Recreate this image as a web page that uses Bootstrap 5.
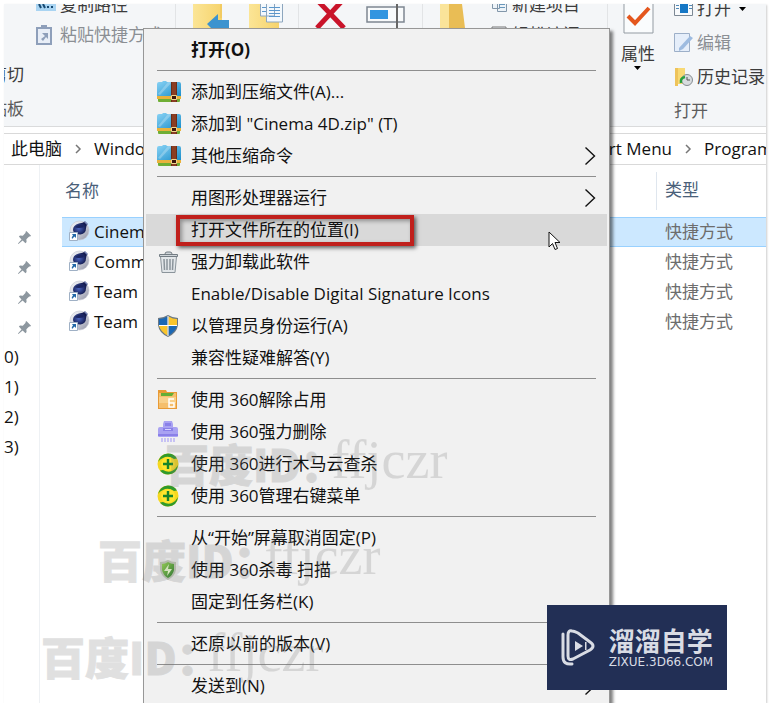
<!DOCTYPE html>
<html lang="zh-CN">
<head>
<meta charset="utf-8">
<meta name="viewport" content="width=device-width, initial-scale=1">
<title>Programs</title>
<link href="https://cdn.jsdelivr.net/npm/bootstrap@5.3.0/dist/css/bootstrap.min.css" rel="stylesheet">
<style>
body{font-family:"Open Sans","Noto Sans CJK SC",sans-serif;font-size:17px;line-height:24px;color:#111;background:#fff}
button{font:inherit;color:inherit;background:none;border:0;padding:0;text-align:left;white-space:nowrap}
svg{display:block;flex:none}
.explorer{margin:4px 4px 0;height:calc(100vh - 9px);min-height:500px;box-shadow:1px 1px 2px #ccc}
.ribbon{height:123px;background:#f4f6f8;border-bottom:1px solid #dadbdc;color:#3c3c3c}
.group{border-right:1px solid #e2e4e6;flex:none}
.g-clip{width:172px}.g-org{width:123px}.g-edit{width:124px}.g-new{width:185px}
.edge-col{width:20px;line-height:34px}
.clip-col{padding:0 0 76px 12px}
.new-col{padding:0 0 76px 24px}
.clip-col button,.new-col button{height:30px;flex:none}
.big-row{height:24px}
.open-col{padding-left:6px}
.open-col>*{height:34px;flex:none}
.open-col .dim{height:32px;line-height:34px}
.prop-col{width:60px}
.faded{color:#8b8f94}
.dim{color:#5d5d5d}
.address{height:32px;margin-top:6px;border:solid #d9d9d9;border-width:1px 0;line-height:22px}
.address a{color:#111;text-decoration:none}
.address .here{padding-left:7px}
.last-crumb{width:62px}
.side{width:36px;border-right:1px solid #eef1f4;padding-top:57px;line-height:30px}
.side>*{height:30px}
.side>div{padding-right:7px}
.files{padding-left:22px}
.files table{table-layout:fixed}
.files th{height:52px;font-weight:400;color:#4a6079;padding:0 3px;vertical-align:middle}
.files td{height:30px;padding:0 6px;vertical-align:middle}
.files .kind{width:110px;padding-left:9px;color:#6d6d6d}
.files th.kind{color:#4a6079}
.files th.kind span{display:block;border-left:1px solid #dfe6ee;margin-left:-9px;padding:6px 0 8px 8px}
.files .picked td{background:#cce8ff;box-shadow:inset 0 1px #99d1ff,inset 0 -1px #99d1ff}
.context{left:139px;top:24px;width:467px;background:#f1f1f1;border:1px solid #979797;padding:5px 2px;box-shadow:3px 3px 3px rgba(0,0,0,.5);z-index:2}
.context button{height:32px;width:100%;padding:0 11px}
.context button.hot{background:#d9d9d9}
.context .slot{width:24px;margin-right:10px}
.context hr{margin:4px 11px 5px;border-top:1px solid #8e8e8e;opacity:1}
.outline-box{left:30px;top:1px;width:238px;height:31px;border:4px solid #c0201c;box-shadow:2px 2px 4px rgba(0,0,0,.6),inset 2px 2px 4px rgba(0,0,0,.35)}
.pointer{left:402px;top:17px}
.stamp{z-index:3;opacity:.22;color:#777;white-space:nowrap;pointer-events:none;line-height:60px}
.stamp b{font:900 44px/60px "Noto Sans CJK SC",sans-serif;-webkit-text-stroke:1px #777}
.stamp i{font:normal 54px/60px "Liberation Serif",serif;margin-left:-13px;vertical-align:4px}
.s1{left:161px;top:426px}.s2{left:94px;top:522px}.s3{left:37px;top:619px}
.brand{z-index:4;right:39px;bottom:13px;width:180px;height:85px;background:#222f55;color:#d9dce4}
.brand strong{font-size:26px;line-height:28px;font-weight:700}
.brand small{font-family:"DejaVu Sans",sans-serif;font-size:12px;line-height:14px}
</style>
<script src="https://cdn.jsdelivr.net/npm/bootstrap@5.3.0/dist/js/bootstrap.bundle.min.js"></script>
</head>
<body>
<svg width="0" height="0" class="position-absolute" aria-hidden="true">
<defs>
<linearGradient id="gb" x2="1" y2="1"><stop stop-color="#8bd3f5"/><stop offset="1" stop-color="#1c8fcb"/></linearGradient>
<linearGradient id="gy" x2="1"><stop stop-color="#fbe596"/><stop offset="1" stop-color="#f6d36c"/></linearGradient>
<linearGradient id="gs" x2="1" y2="1"><stop stop-color="#f7f8fb"/><stop offset=".5" stop-color="#cfd1dc"/><stop offset="1" stop-color="#8e90a0"/></linearGradient>
<radialGradient id="gn" cx=".4" cy=".55"><stop stop-color="#4a63bd"/><stop offset="1" stop-color="#141c52"/></radialGradient>
<linearGradient id="gg" x2="1" y2="1"><stop stop-color="#9ade4c"/><stop offset="1" stop-color="#1e7a22"/></linearGradient>
<symbol id="zip" viewBox="0 0 24 24"><path fill="#6fae35" d="M1 17h22v4q0 1-1 1H2q-1 0-1-1z"/><path fill="#e9b23c" d="M0 16h24v3H0z"/><path fill="url(#gb)" d="M0 4q0-2 2-2h3l1-1h3l1 1h12q2 0 2 2v12H0z"/><path fill="#fff" opacity=".25" d="M1 14 11 2h4L3 15z"/><path fill="#8a3d22" d="M14 2h6v20h-6z"/><path fill="#6b2d18" d="M14 2h1v20h-1zM19 2h1v20h-1z"/><path fill="#3c160b" stroke="#f0d68c" d="M14.500 15.500h5v4h-5z"/></symbol>
<symbol id="c4d" viewBox="0 0 22 22"><circle cx="11.500" cy="10.500" r="9.500" fill="url(#gs)" stroke="#c3c5d0" stroke-width=".6"/><path fill="url(#gn)" d="M5 10Q5 5 11 3.500q4-.5 6-2l2.500 2.500q-1.500 2-1.500 4.500 0 5-5.500 6-7 0-7.500-4.500z"/><path fill="#1b2562" d="M7 7q3-3 7-2.500 3 1 1 3Q9 8.500 7 7z"/><path fill="#7a87b8" d="m17 1 3 3-1 1-3-3z"/><path fill="#fff" stroke="#9fb0c5" d="M1.500 12.500h8v8h-8z"/><path fill="#2369a8" d="M4 14h4v4l-1.500-1.500L4 19q-1-2 1-3.500z"/></symbol>
<symbol id="pin" viewBox="0 0 16 16"><path fill="#8d979f" d="m10 1 5 5-1 1-1-.2-3 3 .2 3-1.200 1.200L6 11.200 1.500 15l-.5-.5L4.800 10 2 7l1.200-1.200 3 .2 3-3L9 2z"/></symbol>
<symbol id="plus360" viewBox="0 0 22 22"><circle cx="11" cy="11" r="10.500" fill="#f7d81f"/><path fill="#2f9a2c" d="M1 9Q3 1 11 .5q6 0 9 5l-3 .500Q11 2 6 5 3 6 1 9zM21 12q-1 9-10 9.500-5 0-8-4l3-.5q5 3 9 1 4-2 6-6z"/><circle cx="11" cy="11" r="7" fill="#fde52c"/><path stroke="#15842a" stroke-width="2.400" d="M11 6v10M6 11h10"/></symbol>
<symbol id="crumb" viewBox="0 0 8 10"><path d="m2 1 4 4-4 4" fill="none" stroke="#777" stroke-width="1.500"/></symbol>
<symbol id="more" viewBox="0 0 12 20"><path d="m1.500 1.500 9 8.500-9 8.500" fill="none" stroke="#111" stroke-width="1.400"/></symbol>
</defs></svg>

<main class="explorer position-relative overflow-hidden d-flex flex-column">
  <header class="ribbon d-flex overflow-hidden flex-shrink-0">
    <div class="group g-clip d-flex align-items-end">
      <div class="edge-col d-flex flex-column align-items-end flex-shrink-0"><button>剪切</button><span class="dim text-nowrap">剪贴板</span></div>
      <div class="clip-col d-flex flex-column">
        <button class="d-flex align-items-center gap-1"><svg width="20" height="18"><path fill="#a9d4f2" d="M0 0h20v15H0z"/><path stroke="#174a72" stroke-width="2" d="m3 8 2 4m2-4 2 4m2-1h2m2 0h2"/></svg>复制路径</button>
        <button class="d-flex align-items-center gap-2 faded"><svg width="16" height="20"><path fill="#e8eef7" stroke="#8e9fba" stroke-width="2" d="M1 3h14v16H1z"/><path fill="#8e9fba" d="M5 0h6v4H5zM6 8h6v6l-2-2-3 4-2-2 4-3z"/></svg>粘贴快捷方式</button>
      </div>
    </div>
    <div class="group g-org"><button class="big-row d-flex ps-3 gap-3" aria-label="移动到 复制到"><svg width="38" height="24"><path fill="url(#gy)" d="M1 0h29v24H1z"/><path fill="#f2cb62" d="M28 0h2v14h-2z"/><path fill="#3c93cf" d="m15 20 11-10v6h11v8H19z"/></svg><svg width="38" height="24"><path fill="url(#gy)" d="M3 0h30v24H3z"/><path fill="#f3f8fc" stroke="#8da6be" d="M14.500-1h14v13h-14zM20.500-1h16v19h-16z"/><path stroke="#5b97cc" d="M16 3.500h4M16 7.500h4M23 3.500h11M23 6.500h11M23 9.500h11M23 12.500h11"/></svg></button></div>
    <div class="group g-edit"><button class="big-row d-flex ps-3" aria-label="删除 重命名"><svg width="32" height="24"><path stroke="#c9142a" stroke-width="5" d="m3-3 26 27M27-3 2 24"/></svg><svg class="ms-3" width="46" height="24"><path fill="#f8fafb" stroke="#7d8791" stroke-width="1.500" d="M4 3h37v15H4z"/><path fill="#3295e0" d="M7 6h18v9H7z"/><path stroke="#666" stroke-width="2" d="M34 0v24"/></svg></button></div>
    <div class="group g-new d-flex align-items-end">
      <svg class="align-self-start ms-3" width="28" height="24"><path fill="#fae49a" d="M1 0h12v24H1z"/><path fill="#e9bd55" d="M10 0h13l3 24H10z"/></svg>
      <div class="new-col d-flex flex-column"><button class="d-flex align-items-center gap-1"><svg width="17" height="20"><path fill="#edf3f8" stroke="#8297aa" d="M1.500 1.500h7v12h-7zM6.500 3.500h9v13h-9z"/><path stroke="#6997bb" d="M8 9.500h6M8 12.500h6"/></svg>新建项目</button><button class="d-flex align-items-center gap-1"><svg width="17" height="20"><path fill="#edf3f8" stroke="#777" d="M1 2h14v15H1z"/></svg>轻松访问</button></div>
    </div>
    <div class="prop-col d-flex flex-column align-items-center flex-shrink-0"><button class="d-flex flex-column align-items-center"><svg width="31" height="30"><path fill="#fafcfd" stroke="#939ba2" d="M1-1h29v30H1z"/><path fill="none" stroke="#e4571e" stroke-width="4" d="m5 12 7 7L26 4"/></svg><span class="pt-2">属性</span><svg width="8" height="4"><path d="M0 0h7L3.500 4z"/></svg></button></div>
    <div class="open-col d-flex flex-column justify-content-end text-nowrap">
      <button class="d-flex align-items-center gap-1"><svg width="19" height="18"><path fill="#f8fafc" stroke="#7c8894" d="M.500.500h18v15H.500z"/><path fill="#1577c5" d="M6 3h8v10H6z"/><path stroke="#5089b7" d="M2 5.500h3M2 8.500h3M15 5.500h3M15 8.500h3"/></svg>打开<svg class="ms-1" width="8" height="4"><path d="M0 0h7L3.500 4z"/></svg></button>
      <button class="d-flex align-items-center gap-1 faded"><svg width="19" height="20"><path fill="#e5eefa" stroke="#9cafc8" d="M.500.500h15v18H.500z"/><path fill="#9dbbe0" d="m5 15 11-12 3 2-10 11-4 2z"/></svg>编辑</button>
      <button class="d-flex align-items-center gap-1"><svg width="19" height="20"><path fill="#f8d974" d="M1 1h10v16H1z"/><path fill="#eec35a" d="M1 1h3v18H1z"/><circle cx="13" cy="13" r="5.500" fill="#d8dcdf" stroke="#858c92"/><path d="M13 10v3h3" stroke="#555" fill="none"/><path fill="none" stroke="#28a03e" stroke-width="2.500" d="M7 16q-1-5 4-6"/></svg>历史记录</button>
      <span class="dim">打开</span>
    </div>
  </header>
  <nav class="address d-flex align-items-center justify-content-between flex-shrink-0 text-nowrap" aria-label="地址">
    <div class="here d-flex align-items-center gap-2"><a href="#">此电脑</a><svg class="mx-1" width="8" height="10"><use href="#crumb"/></svg><a href="#">Windows</a></div>
    <div class="d-flex align-items-center gap-2"><a href="#">Start Menu</a><svg class="mx-1" width="8" height="10"><use href="#crumb"/></svg><a class="last-crumb overflow-hidden" href="#">Programs</a></div>
  </nav>
  <div class="d-flex flex-grow-1">
    <aside class="side d-flex flex-column flex-shrink-0">
      <div class="d-flex align-items-center justify-content-end"><svg width="15" height="15"><use href="#pin"/></svg></div>
      <div class="d-flex align-items-center justify-content-end"><svg width="15" height="15"><use href="#pin"/></svg></div>
      <div class="d-flex align-items-center justify-content-end"><svg width="15" height="15"><use href="#pin"/></svg></div>
      <div class="d-flex align-items-center justify-content-end"><svg width="15" height="15"><use href="#pin"/></svg></div>
      <span>0)</span><span>1)</span><span>2)</span><span>3)</span>
    </aside>
    <section class="files flex-grow-1">
      <table class="w-100">
        <thead><tr><th>名称</th><th class="kind"><span>类型</span></th></tr></thead>
        <tbody>
          <tr class="picked"><td><div class="d-flex gap-1"><svg width="22" height="22"><use href="#c4d"/></svg><span>Cinema 4D</span></div></td><td class="kind">快捷方式</td></tr>
          <tr><td><div class="d-flex gap-1"><svg width="22" height="22"><use href="#c4d"/></svg><span>Commandline</span></div></td><td class="kind">快捷方式</td></tr>
          <tr><td><div class="d-flex gap-1"><svg width="22" height="22"><use href="#c4d"/></svg><span>Team</span></div></td><td class="kind">快捷方式</td></tr>
          <tr><td><div class="d-flex gap-1"><svg width="22" height="22"><use href="#c4d"/></svg><span>Team</span></div></td><td class="kind">快捷方式</td></tr>
        </tbody>
      </table>
    </section>
  </div>

  <div class="context position-absolute" role="menu">
    <button class="d-flex align-items-center fw-bold"><span class="slot"></span>打开(O)</button>
    <hr>
    <button class="d-flex align-items-center"><svg class="slot" height="24"><use href="#zip"/></svg>添加到压缩文件(A)...</button>
    <button class="d-flex align-items-center"><svg class="slot" height="24"><use href="#zip"/></svg>添加到 "Cinema 4D.zip" (T)</button>
    <button class="d-flex align-items-center"><svg class="slot" height="24"><use href="#zip"/></svg>其他压缩命令<svg class="ms-auto" width="12" height="20"><use href="#more"/></svg></button>
    <hr>
    <button class="d-flex align-items-center"><span class="slot"></span>用图形处理器运行<svg class="ms-auto" width="12" height="20"><use href="#more"/></svg></button>
    <button class="hot d-flex align-items-center position-relative"><span class="slot"></span>打开文件所在的位置(I)<span class="outline-box position-absolute"></span><svg class="pointer position-absolute" width="14" height="20" viewBox="0 0 14 20"><path fill="#fff" stroke="#111" d="M1 1v15l3.500-3.500L7 18.500l2.500-1L7 11.500h5z"/></svg></button>
    <button class="d-flex align-items-center"><svg class="slot" height="24" viewBox="0 0 24 24"><path fill="#e2e6e9" stroke="#8b949b" d="M3.500 6.500h16l-1.500 16H5z"/><path fill="#cfd5d9" stroke="#737c83" d="M2.500 4.500h18v2h-18zM8 4q0-2 2-2h3q2 0 2 2"/><path stroke="#8b949b" stroke-width="1.500" d="m7 9 .5 11M10 9v11M13 9v11m3-11-.5 11"/></svg>强力卸载此软件</button>
    <button class="d-flex align-items-center"><span class="slot"></span>Enable/Disable Digital Signature Icons</button>
    <button class="d-flex align-items-center"><svg class="slot" height="24" viewBox="0 0 24 24"><path fill="#6b7884" d="M11 1Q6 4 1 4v7q1 8 10 12 9-4 10-12V4Q16 4 11 1z"/><path fill="#1b68b5" d="M10.500 2.500Q6 5 2 5v6h8.500zM11.500 12H20q-2 6-8.500 9.500z"/><path fill="#f9c52d" d="M11.500 2.500Q16 5 20 5v6h-8.500zM10.500 12H2q2 6 8.500 9.500z"/><path stroke="#fff" d="M11 2v20M2 11.500h18"/></svg>以管理员身份运行(A)</button>
    <button class="d-flex align-items-center"><span class="slot"></span>兼容性疑难解答(Y)</button>
    <hr>
    <button class="d-flex align-items-center"><svg class="slot" height="24" viewBox="0 0 24 24"><path fill="#e89a35" d="M1 2h8l1 2h10v17H1z"/><path fill="#f5bf6c" d="M2 5h17v15H2z"/><path fill="#f8d08a" d="M2 9h17v6H2z"/><path fill="#62ae36" d="M4 5h13l-2 3H4z"/><path fill="none" stroke="#fff" stroke-width="1.500" d="M17 11h-5v8h5v-4h-5"/></svg>使用 360解除占用</button>
    <button class="d-flex align-items-center"><svg class="slot" height="24" viewBox="0 0 24 24"><path fill="#a9a2f2" d="M7 1h8l1 3v3h3q2 0 2 2v7q0 1-1 1H2q-1 0-1-1V9q0-2 2-2h3V4z"/><path fill="#8a80e8" d="M8 3h6v3H8zM6 8h10v3H6zM1 14h20v2H1z"/><path fill="#d8d4ff" d="M8 9h6v1H8z"/><path stroke="#b9b3f5" stroke-width="1.500" d="M5 18v4M8 18v4M11 18v4M14 18v4M17 18v4"/></svg>使用 360强力删除</button>
    <button class="d-flex align-items-center"><svg class="slot" height="22"><use href="#plus360" width="22" height="22"/></svg>使用 360进行木马云查杀</button>
    <button class="d-flex align-items-center"><svg class="slot" height="22"><use href="#plus360" width="22" height="22"/></svg>使用 360管理右键菜单</button>
    <hr>
    <button class="d-flex align-items-center"><span class="slot"></span>从“开始”屏幕取消固定(P)</button>
    <button class="d-flex align-items-center"><svg class="slot" height="24" viewBox="0 0 24 24"><path fill="#c3cbb9" d="M11 2Q8 4 3 4v8q1 6 8 10 7-4 8-10V4q-5 0-8-2z"/><path fill="url(#gg)" d="M11 4Q8 6 5 6v6q1 5 6 8 5-3 6-8V6q-3 0-6-2z"/><path fill="#edffd0" d="m12 6-5 7h4l-1 5 5-7h-4z"/></svg>使用 360杀毒 扫描</button>
    <button class="d-flex align-items-center"><span class="slot"></span>固定到任务栏(K)</button>
    <hr>
    <button class="d-flex align-items-center"><span class="slot"></span>还原以前的版本(V)</button>
    <hr>
    <button class="d-flex align-items-center"><span class="slot"></span>发送到(N)<svg class="ms-auto" width="12" height="20"><use href="#more"/></svg></button>
  </div>

  <div class="stamp s1 position-absolute"><b>百度ID：</b><i>ffjczr</i></div>
  <div class="stamp s2 position-absolute"><b>百度ID：</b><i>ffjczr</i></div>
  <div class="stamp s3 position-absolute"><b>百度ID：</b><i>ffjczr</i></div>

  <div class="brand position-absolute d-flex align-items-center justify-content-center gap-2">
    <svg width="36" height="38" viewBox="0 0 36 38"><path fill="none" stroke="#d9dce4" stroke-width="3" stroke-linecap="round" d="M2 5v23q0 8 9 7M11 2q-4-1-4 4v21q0 5 5 3l17-9q6-4 0-8L17 4q-4-2-6-2z"/><path fill="#d9dce4" d="m14 12 8 5-8 5zM24 13h1.500v8H24z"/></svg>
    <div class="d-flex flex-column ps-1"><strong>溜溜自学</strong><small>ZIXUE.3D66.COM</small></div>
  </div>
</main>
</body>
</html>
